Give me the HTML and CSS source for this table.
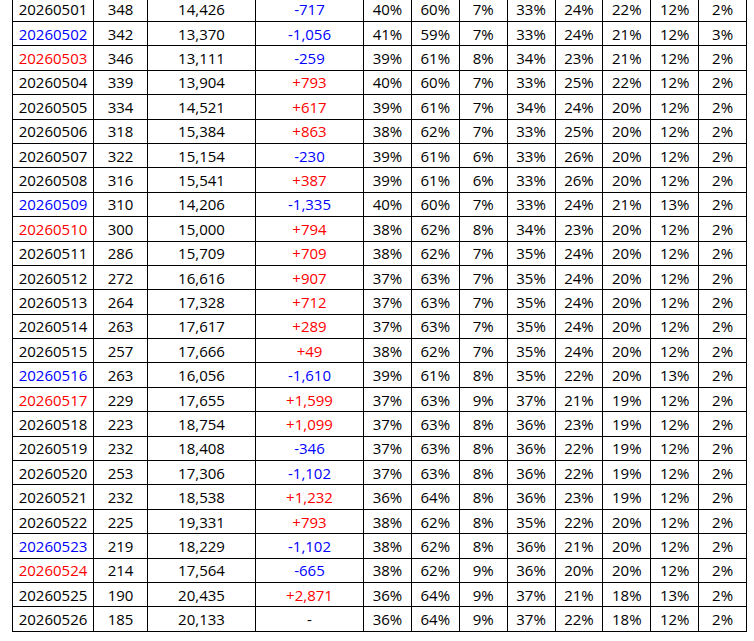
FILE: index.html
```html
<!DOCTYPE html>
<html lang="ko">
<head>
<meta charset="utf-8">
<title>Table</title>
<link rel="stylesheet" href="styles.css">
</head>
<body>
<table class="grid">
<colgroup>
<col class="c-date"><col class="c-n"><col class="c-wide"><col class="c-wide">
<col class="c-p"><col class="c-p"><col class="c-p"><col class="c-p"><col class="c-p"><col class="c-p"><col class="c-p"><col class="c-p">
</colgroup>
<tbody>
<tr><td>20260501</td><td>348</td><td>14,426</td><td class="blue">-717</td><td>40%</td><td>60%</td><td>7%</td><td>33%</td><td>24%</td><td>22%</td><td>12%</td><td>2%</td></tr>
<tr><td class="blue">20260502</td><td>342</td><td>13,370</td><td class="blue">-1,056</td><td>41%</td><td>59%</td><td>7%</td><td>33%</td><td>24%</td><td>21%</td><td>12%</td><td>3%</td></tr>
<tr><td class="red">20260503</td><td>346</td><td>13,111</td><td class="blue">-259</td><td>39%</td><td>61%</td><td>8%</td><td>34%</td><td>23%</td><td>21%</td><td>12%</td><td>2%</td></tr>
<tr><td>20260504</td><td>339</td><td>13,904</td><td class="red">+793</td><td>40%</td><td>60%</td><td>7%</td><td>33%</td><td>25%</td><td>22%</td><td>12%</td><td>2%</td></tr>
<tr><td>20260505</td><td>334</td><td>14,521</td><td class="red">+617</td><td>39%</td><td>61%</td><td>7%</td><td>34%</td><td>24%</td><td>20%</td><td>12%</td><td>2%</td></tr>
<tr><td>20260506</td><td>318</td><td>15,384</td><td class="red">+863</td><td>38%</td><td>62%</td><td>7%</td><td>33%</td><td>25%</td><td>20%</td><td>12%</td><td>2%</td></tr>
<tr><td>20260507</td><td>322</td><td>15,154</td><td class="blue">-230</td><td>39%</td><td>61%</td><td>6%</td><td>33%</td><td>26%</td><td>20%</td><td>12%</td><td>2%</td></tr>
<tr><td>20260508</td><td>316</td><td>15,541</td><td class="red">+387</td><td>39%</td><td>61%</td><td>6%</td><td>33%</td><td>26%</td><td>20%</td><td>12%</td><td>2%</td></tr>
<tr><td class="blue">20260509</td><td>310</td><td>14,206</td><td class="blue">-1,335</td><td>40%</td><td>60%</td><td>7%</td><td>33%</td><td>24%</td><td>21%</td><td>13%</td><td>2%</td></tr>
<tr><td class="red">20260510</td><td>300</td><td>15,000</td><td class="red">+794</td><td>38%</td><td>62%</td><td>8%</td><td>34%</td><td>23%</td><td>20%</td><td>12%</td><td>2%</td></tr>
<tr><td>20260511</td><td>286</td><td>15,709</td><td class="red">+709</td><td>38%</td><td>62%</td><td>7%</td><td>35%</td><td>24%</td><td>20%</td><td>12%</td><td>2%</td></tr>
<tr><td>20260512</td><td>272</td><td>16,616</td><td class="red">+907</td><td>37%</td><td>63%</td><td>7%</td><td>35%</td><td>24%</td><td>20%</td><td>12%</td><td>2%</td></tr>
<tr><td>20260513</td><td>264</td><td>17,328</td><td class="red">+712</td><td>37%</td><td>63%</td><td>7%</td><td>35%</td><td>24%</td><td>20%</td><td>12%</td><td>2%</td></tr>
<tr><td>20260514</td><td>263</td><td>17,617</td><td class="red">+289</td><td>37%</td><td>63%</td><td>7%</td><td>35%</td><td>24%</td><td>20%</td><td>12%</td><td>2%</td></tr>
<tr><td>20260515</td><td>257</td><td>17,666</td><td class="red">+49</td><td>38%</td><td>62%</td><td>7%</td><td>35%</td><td>24%</td><td>20%</td><td>12%</td><td>2%</td></tr>
<tr><td class="blue">20260516</td><td>263</td><td>16,056</td><td class="blue">-1,610</td><td>39%</td><td>61%</td><td>8%</td><td>35%</td><td>22%</td><td>20%</td><td>13%</td><td>2%</td></tr>
<tr><td class="red">20260517</td><td>229</td><td>17,655</td><td class="red">+1,599</td><td>37%</td><td>63%</td><td>9%</td><td>37%</td><td>21%</td><td>19%</td><td>12%</td><td>2%</td></tr>
<tr><td>20260518</td><td>223</td><td>18,754</td><td class="red">+1,099</td><td>37%</td><td>63%</td><td>8%</td><td>36%</td><td>23%</td><td>19%</td><td>12%</td><td>2%</td></tr>
<tr><td>20260519</td><td>232</td><td>18,408</td><td class="blue">-346</td><td>37%</td><td>63%</td><td>8%</td><td>36%</td><td>22%</td><td>19%</td><td>12%</td><td>2%</td></tr>
<tr><td>20260520</td><td>253</td><td>17,306</td><td class="blue">-1,102</td><td>37%</td><td>63%</td><td>8%</td><td>36%</td><td>22%</td><td>19%</td><td>12%</td><td>2%</td></tr>
<tr><td>20260521</td><td>232</td><td>18,538</td><td class="red">+1,232</td><td>36%</td><td>64%</td><td>8%</td><td>36%</td><td>23%</td><td>19%</td><td>12%</td><td>2%</td></tr>
<tr><td>20260522</td><td>225</td><td>19,331</td><td class="red">+793</td><td>38%</td><td>62%</td><td>8%</td><td>35%</td><td>22%</td><td>20%</td><td>12%</td><td>2%</td></tr>
<tr><td class="blue">20260523</td><td>219</td><td>18,229</td><td class="blue">-1,102</td><td>38%</td><td>62%</td><td>8%</td><td>36%</td><td>21%</td><td>20%</td><td>12%</td><td>2%</td></tr>
<tr><td class="red">20260524</td><td>214</td><td>17,564</td><td class="blue">-665</td><td>38%</td><td>62%</td><td>9%</td><td>36%</td><td>20%</td><td>20%</td><td>12%</td><td>2%</td></tr>
<tr><td>20260525</td><td>190</td><td>20,435</td><td class="red">+2,871</td><td>36%</td><td>64%</td><td>9%</td><td>37%</td><td>21%</td><td>18%</td><td>13%</td><td>2%</td></tr>
<tr><td>20260526</td><td>185</td><td>20,133</td><td>-</td><td>36%</td><td>64%</td><td>9%</td><td>37%</td><td>22%</td><td>18%</td><td>12%</td><td>2%</td></tr>
</tbody>
</table>
</body>
</html>
```
FILE: styles.css
```css
html, body {
  background: #ffffff;
}
body {
  margin: -3.4px 0 0 12px;
  font-family: "Open Sans", "Liberation Sans", sans-serif;
  font-size: 15px;
  color: #000000;
}
.grid {
  border-collapse: collapse;
  table-layout: fixed;
  width: 734px;
}
.c-date { width: 81px; }
.c-n { width: 54px; }
.c-wide { width: 108px; }
.c-p { width: 47.875px; }
.grid td {
  border: 1px solid #000000;
  height: 23.4px;
  padding: 0;
  text-align: center;
  vertical-align: middle;
  line-height: 18px;
  white-space: nowrap;
}
.blue { color: #0000ff; }
.red { color: #ff0000; }
```
